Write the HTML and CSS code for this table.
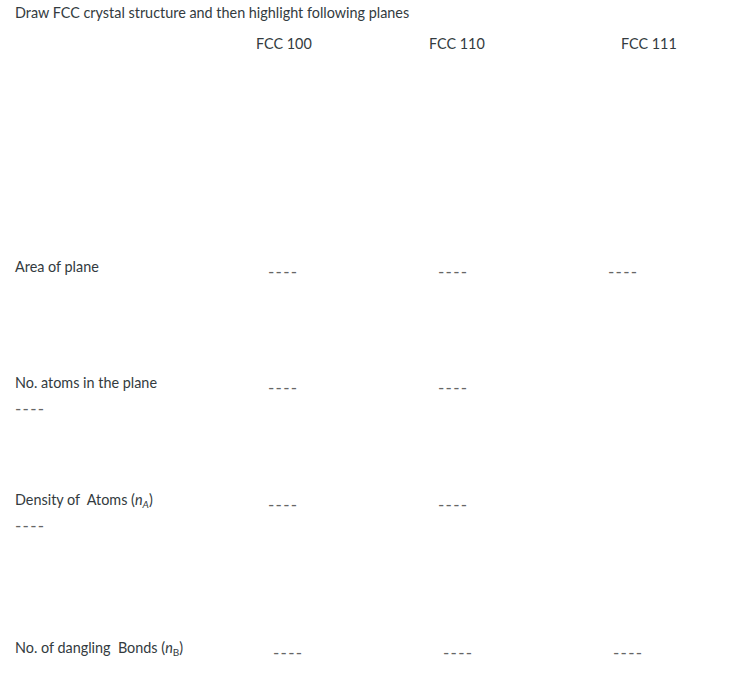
FILE: index.html
```html
<!DOCTYPE html>
<html>
<head>
<meta charset="utf-8">
<link rel="stylesheet" href="styles.css">
</head>
<body>
<div class="page">
  <p class="title">Draw FCC crystal structure and then highlight following planes</p>
  <div class="head-row">
    <span>FCC 100</span>
    <span>FCC 110</span>
    <span>FCC 111</span>
  </div>

  <div class="row r1">
    <span class="label">Area of plane</span>
    <span class="cell"><span class="dash">----</span></span>
    <span class="cell"><span class="dash">----</span></span>
    <span class="cell"><span class="dash">----</span></span>
  </div>

  <div class="row r2">
    <span class="label">No. atoms in the plane</span>
    <span class="cell"><span class="dash">----</span></span>
    <span class="cell"><span class="dash">----</span></span>
    <span class="cell"></span>
  </div>
  <div class="line2"><span class="dash">----</span></div>

  <div class="row r3">
    <span class="label">Density of&nbsp; Atoms (<i>n<sub>A</sub></i>)</span>
    <span class="cell"><span class="dash">----</span></span>
    <span class="cell"><span class="dash">----</span></span>
    <span class="cell"></span>
  </div>
  <div class="line2"><span class="dash">----</span></div>

  <div class="row r4">
    <span class="label">No. of dangling&nbsp; Bonds (<i>n</i><sub>B</sub>)</span>
    <span class="cell shift"><span class="dash">----</span></span>
    <span class="cell shift"><span class="dash">----</span></span>
    <span class="cell shift"><span class="dash">----</span></span>
  </div>
</div>
</body>
</html>
```

FILE: styles.css
```css
html, body {
  margin: 0;
  padding: 0;
  background: #ffffff;
}

.page {
  font-family: Lato, "Liberation Sans", sans-serif;
  font-size: 14.4px;
  line-height: 20px;
  color: #333b40;
  padding: 3px 0 0 15px;
}

.title {
  margin: 0;
  height: 20px;
}

.head-row {
  margin-top: 11px;
  height: 20px;
  padding-left: 241px;
  display: grid;
  grid-template-columns: 173px 192px auto;
}

.row {
  display: grid;
  height: 20px;
  grid-template-columns: 253px 170px 170px 1fr;
}

.r1 { margin-top: 203px; }
.r2 { margin-top: 96px; }
.r3 { margin-top: 76px; }
.r4 { margin-top: 107px; }

.line2 {
  margin-top: 1px;
  height: 20px;
}

.cell.shift {
  padding-left: 5px;
}

.dash {
  font-size: 17px;
  letter-spacing: 1.3px;
  line-height: 0;
  color: #666;
  vertical-align: -6px;
}

sub {
  font-size: 10px;
  line-height: 0;
  vertical-align: -3px;
}
```
